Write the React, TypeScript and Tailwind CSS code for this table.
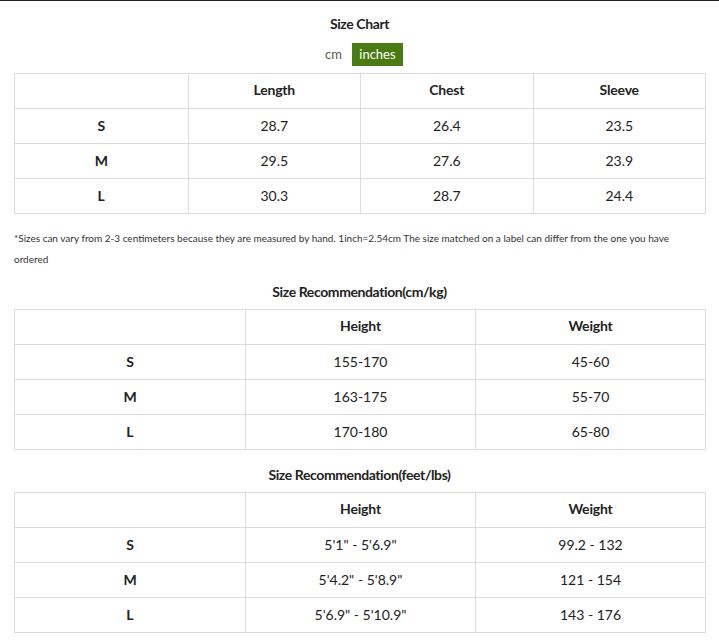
import React from "react";

const font = { fontFamily: "Lato, 'Open Sans', sans-serif" };

function Row({ cells, cols, header }: { cells: string[]; cols: string; header?: boolean }) {
  return (
    <div className={`grid ${cols} h-[35px] border-b border-[#dcdcdc]`}>
      {cells.map((c, i) => (
        <div
          key={i}
          className={`flex items-center justify-center text-[14px] text-[#222] ${i > 0 ? "border-l border-[#dcdcdc]" : ""} ${
            header || i === 0 ? "font-bold" : "font-normal"
          } ${header ? "pb-[3px] tracking-[-0.2px]" : "pb-[1px]"}`}
        >
          {c}
        </div>
      ))}
    </div>
  );
}

function Table({ rows, cols }: { rows: string[][]; cols: string }) {
  return (
    <div className="mx-[14px] w-[692px] border-t border-l border-r border-[#dcdcdc]">
      {rows.map((r, i) => (
        <Row key={i} cells={r} cols={cols} header={i === 0} />
      ))}
    </div>
  );
}

export default function App() {
  return (
    <div className="w-[719px] h-[641px] bg-white border-t border-[#222] overflow-hidden" style={font}>
      <div className="mt-[13px] h-[20px] leading-[20px] text-center text-[14px] font-bold tracking-[-0.4px] text-[#222]">Size Chart</div>
      <div className="mt-[9px] flex justify-center items-center gap-[10px] pl-[9px]">
        <span className="text-[13px] text-[#5a5a4a]">cm</span>
        <span className="h-[23px] w-[51px] flex items-center justify-center bg-[#4a7a12] text-white text-[13px]">inches</span>
      </div>
      <div className="mt-[7px]">
        <Table
          cols="grid-cols-4"
          rows={[
            ["", "Length", "Chest", "Sleeve"],
            ["S", "28.7", "26.4", "23.5"],
            ["M", "29.5", "27.6", "23.9"],
            ["L", "30.3", "28.7", "24.4"],
          ]}
        />
      </div>
      <p className="mt-[14px] mx-[14px] text-[10px] leading-[21px] text-[#333]">
        *Sizes can vary from 2-3 centimeters because they are measured by hand. 1inch=2.54cm The size matched on a label can differ from the one you have
        <br />
        ordered
      </p>
      <div className="mt-[12px] h-[20px] leading-[20px] text-center text-[14px] font-bold tracking-[-0.4px] text-[#222]">Size Recommendation(cm/kg)</div>
      <div className="mt-[7px]">
        <Table
          cols="grid-cols-3"
          rows={[
            ["", "Height", "Weight"],
            ["S", "155-170", "45-60"],
            ["M", "163-175", "55-70"],
            ["L", "170-180", "65-80"],
          ]}
        />
      </div>
      <div className="mt-[15px] h-[20px] leading-[20px] text-center text-[14px] font-bold tracking-[-0.4px] text-[#222]">Size Recommendation(feet/lbs)</div>
      <div className="mt-[7px]">
        <Table
          cols="grid-cols-3"
          rows={[
            ["", "Height", "Weight"],
            ["S", "5'1\" - 5'6.9\"", "99.2 - 132"],
            ["M", "5'4.2\" - 5'8.9\"", "121 - 154"],
            ["L", "5'6.9\" - 5'10.9\"", "143 - 176"],
          ]}
        />
      </div>
    </div>
  );
}
